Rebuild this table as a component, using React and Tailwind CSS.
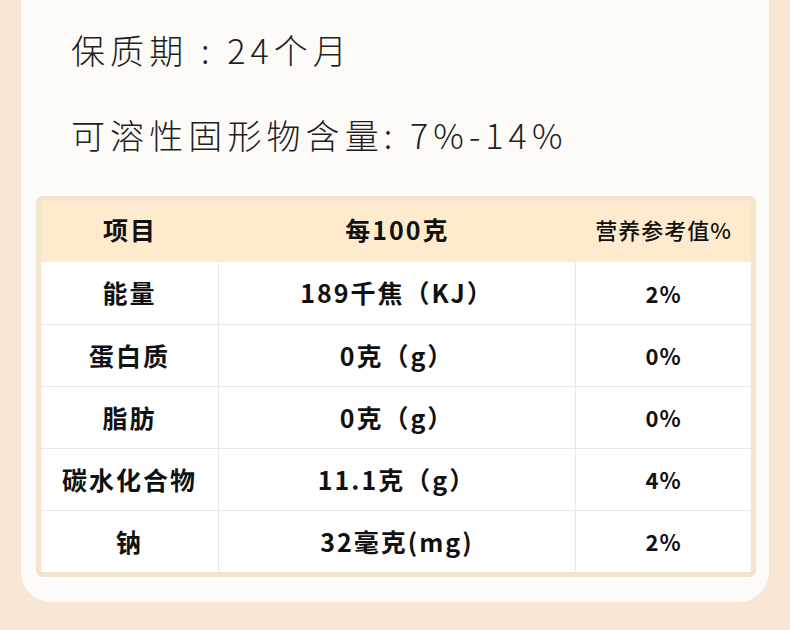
export default function App() {
  const rows = [
    ["能量", "189千焦（KJ）", "2%"],
    ["蛋白质", "0克（g）", "0%"],
    ["脂肪", "0克（g）", "0%"],
    ["碳水化合物", "11.1克（g）", "4%"],
    ["钠", "32毫克(mg)", "2%"],
  ];
  const font = { fontFamily: '"Noto Sans CJK SC", "Noto Sans", sans-serif' };
  return (
    <div className="w-[790px] h-[630px] bg-[#f7e7d4] overflow-hidden" style={font}>
      <div className="ml-[21px] w-[748px] h-[602px] bg-[#fdfbf8] rounded-b-[30px] pt-[26px]">
        <div className="pl-[50px] text-[34px] leading-[48px] tracking-[0.15em] font-light text-[#1e1e1e] whitespace-pre">
          保质期 : 24个月
        </div>
        <div className="pl-[50px] mt-[37px] text-[34px] leading-[48px] tracking-[0.15em] font-light text-[#1e1e1e]">
          可溶性固形物含量: 7%-14%
        </div>
        <div className="mt-[37px] ml-[15px] w-[720px] border-[#f3e4cd] border-x-[5px] border-t-[4px] border-b-[5px] rounded-[7px] overflow-hidden">
          <div className="grid grid-cols-[178px_357px_1fr] h-[62px] bg-[#feebcd] items-center text-center text-[#111]">
            <div className="text-[25px] font-bold tracking-[2px] -mt-[3px]">项目</div>
            <div className="text-[25px] font-bold tracking-[2px] -mt-[3px]">每100克</div>
            <div className="text-[22px] font-medium tracking-[1px] -mt-[3px]">营养参考值%</div>
          </div>
          {rows.map((r, i) => (
            <div
              key={i}
              className={`grid grid-cols-[178px_357px_1fr] h-[62px] bg-white text-center text-[25px] font-bold tracking-[2px] text-[#111] ${i > 0 ? "border-t border-[#e8e8e8]" : ""}`}
            >
              <div className="flex items-center justify-center border-r border-[#e8e8e8]">{r[0]}</div>
              <div className="flex items-center justify-center border-r border-[#e8e8e8]">{r[1]}</div>
              <div className="flex items-center justify-center text-[22px] tracking-[1px]">{r[2]}</div>
            </div>
          ))}
        </div>
      </div>
    </div>
  );
}
